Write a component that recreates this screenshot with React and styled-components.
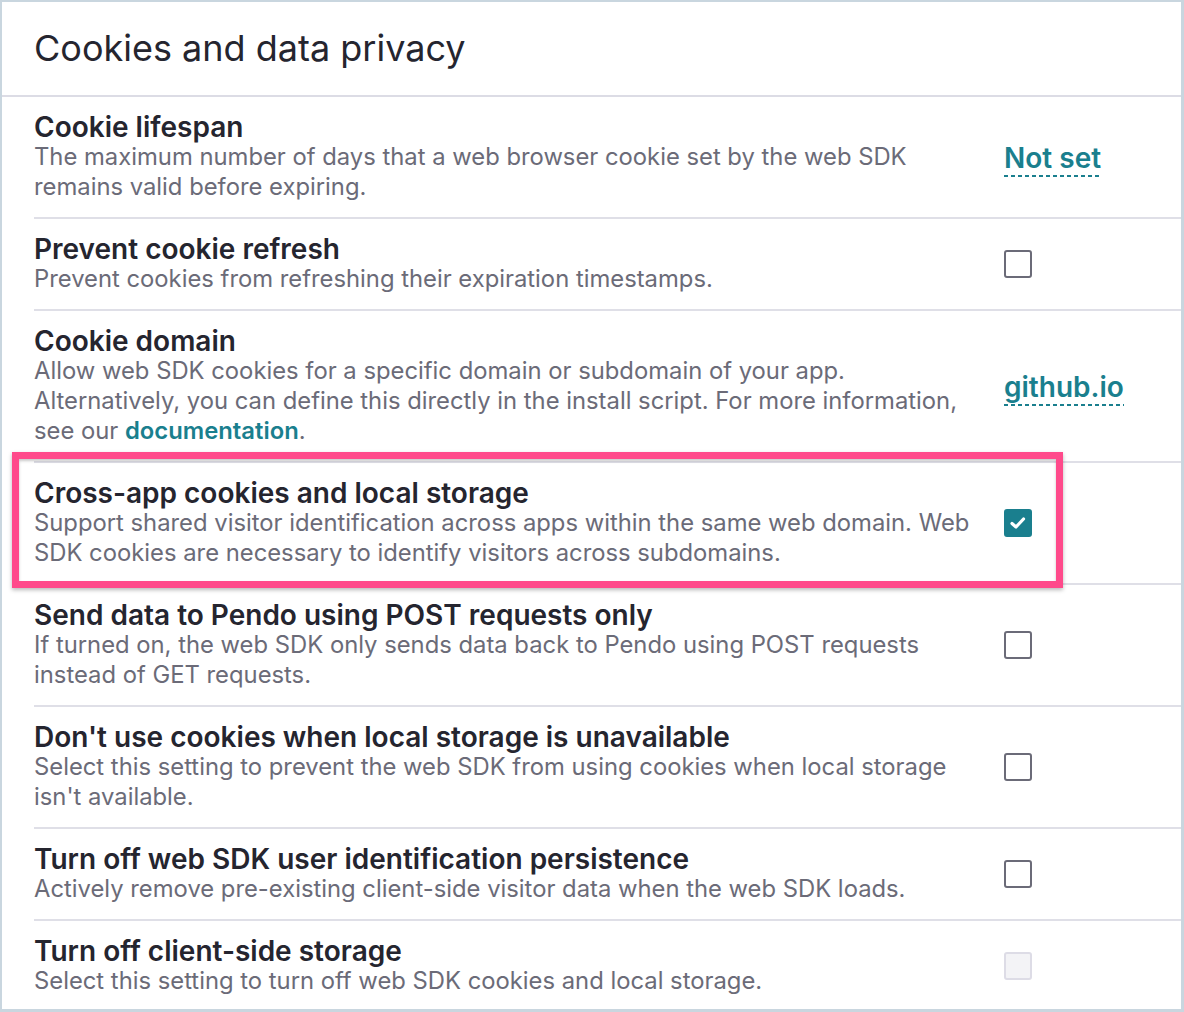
import React from 'react'
import styled, { createGlobalStyle } from 'styled-components'

const GlobalStyle = createGlobalStyle`
    html, body {
        margin: 0;
        padding: 0;
        background: #ffffff;
    }
    * {
        box-sizing: border-box;
    }
`;

const Panel = styled.div`
    width: 1184px;
    height: 1012px;
    border: 2px solid #c9d6df;
    border-right-width: 3px;
    border-bottom-width: 3px;
    background: #ffffff;
    font-family: Inter, 'Noto Sans', sans-serif;
    overflow: hidden;
`;

const Header = styled.div`
    height: 95px;
    display: flex;
    align-items: center;
    padding-left: 32px;
    padding-bottom: 2px;
    border-bottom: 2px solid #dcdce5;
`;

const Title = styled.h1`
    margin: 0;
    font-size: 36px;
    font-weight: 400;
    color: #25252f;
`;

const List = styled.div`
    margin-left: 32px;
`;

const Row = styled.div`
    position: relative;
    display: flex;
    align-items: center;
    padding: 15px 0 15px;
    border-bottom: ${p => (p.last ? 'none' : '2px solid #dfdfe7')};
`;

const TextCol = styled.div`
    flex: 1;
    padding-right: 18px;
`;

const RowTitle = styled.div`
    font-size: 28px;
    line-height: 30px;
    font-weight: 600;
    color: #25252f;
`;

const Desc = styled.div`
    font-size: 23.8px;
    line-height: 30px;
    color: #6b6b78;
`;

const DocLink = styled.a`
    color: #1a7f8e;
    font-weight: 600;
    text-decoration: none;
`;

const Control = styled.div`
    width: 177px;
    flex-shrink: 0;
    display: flex;
    align-items: center;
`;

const ValueLink = styled.span`
    font-size: 28px;
    line-height: 30px;
    font-weight: 600;
    color: #1a7f8e;
    padding: 5px 0 4px;
    background-image: linear-gradient(to right, #1a7f8e 58%, transparent 0);
    background-size: 7px 2px;
    background-repeat: repeat-x;
    background-position: left bottom;
`;

const Box = styled.span`
    width: 28px;
    height: 28px;
    border-radius: 3px;
    display: inline-flex;
    align-items: center;
    justify-content: center;
    border: 2px solid ${p => (p.checked ? '#1a7f8e' : p.disabled ? '#dddce6' : '#6b6b78')};
    background: ${p => (p.checked ? '#1a7f8e' : p.disabled ? '#f3f3f6' : '#ffffff')};
`;

const Highlight = styled.div`
    position: absolute;
    left: -22px;
    top: -11px;
    width: 1051px;
    height: 136px;
    border: 7px solid #ff4a8b;
    box-shadow: 0 2px 4px rgba(0, 0, 0, 0.28), inset 0 2px 3px rgba(0, 0, 0, 0.22);
    pointer-events: none;
`;

const Checkbox = ({ checked, disabled }) => (
    <Box checked={checked} disabled={disabled}>
        {checked && (
            <svg width="20" height="20" viewBox="0 0 20 20">
                <polyline points="4,10.5 8,14 15.5,6" fill="none" stroke="#ffffff" strokeWidth="3.2" strokeLinecap="round" strokeLinejoin="round" />
            </svg>
        )}
    </Box>
);

const settings = [
    {
        title: 'Cookie lifespan',
        desc: 'The maximum number of days that a web browser cookie set by the web SDK remains valid before expiring.',
        value: 'Not set',
    },
    {
        title: 'Prevent cookie refresh',
        desc: 'Prevent cookies from refreshing their expiration timestamps.',
    },
    {
        title: 'Cookie domain',
        desc: (
            <>
                Allow web SDK cookies for a specific domain or subdomain of your app. Alternatively, you can define this directly in the install script. For more information, see our <DocLink href="#">documentation</DocLink>.
            </>
        ),
        value: 'github.io',
    },
    {
        title: 'Cross-app cookies and local storage',
        desc: 'Support shared visitor identification across apps within the same web domain. Web SDK cookies are necessary to identify visitors across subdomains.',
        checked: true,
        highlight: true,
    },
    {
        title: 'Send data to Pendo using POST requests only',
        desc: 'If turned on, the web SDK only sends data back to Pendo using POST requests instead of GET requests.',
    },
    {
        title: "Don't use cookies when local storage is unavailable",
        desc: "Select this setting to prevent the web SDK from using cookies when local storage isn't available.",
    },
    {
        title: 'Turn off web SDK user identification persistence',
        desc: 'Actively remove pre-existing client-side visitor data when the web SDK loads.',
    },
    {
        title: 'Turn off client-side storage',
        desc: 'Select this setting to turn off web SDK cookies and local storage.',
        disabled: true,
    },
];

export default function App() {
    return (
        <>
            <GlobalStyle />
            <Panel>
                <Header>
                    <Title>Cookies and data privacy</Title>
                </Header>
                <List>
                    {settings.map((s, i) => (
                        <Row key={s.title} last={i === settings.length - 1}>
                            <TextCol>
                                <RowTitle>{s.title}</RowTitle>
                                <Desc>{s.desc}</Desc>
                            </TextCol>
                            <Control>
                                {s.value ? (
                                    <ValueLink>{s.value}</ValueLink>
                                ) : (
                                    <Checkbox checked={s.checked} disabled={s.disabled} />
                                )}
                            </Control>
                            {s.highlight && <Highlight />}
                        </Row>
                    ))}
                </List>
            </Panel>
        </>
    );
}
